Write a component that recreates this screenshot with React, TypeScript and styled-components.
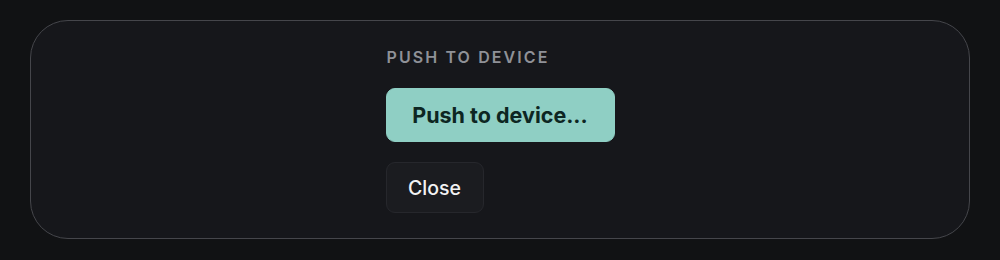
import React from "react";
import styled, { createGlobalStyle } from "styled-components";

const Global = createGlobalStyle`
  html, body { margin: 0; padding: 0; background: #111214; }
  body { font-family: Inter, "Noto Sans", sans-serif; -webkit-font-smoothing: antialiased; }
`;

const Page = styled.div`
  width: 1000px;
  height: 260px;
  box-sizing: border-box;
  padding: 20px 30px 21px;
  background: #111214;
`;

const Card = styled.section`
  box-sizing: border-box;
  height: 219px;
  border: 1px solid #45464b;
  border-radius: 38px;
  background: #16171b;
  display: flex;
  justify-content: center;
  padding-top: 26px;
`;

const Column = styled.div`
  width: 229px;
  display: flex;
  flex-direction: column;
  align-items: flex-start;
`;

const Label = styled.h2`
  margin: 0 0 0 1px;
  font-size: 16px;
  line-height: 20px;
  font-weight: 600;
  letter-spacing: 2.1px;
  color: #8f9197;
  text-transform: uppercase;
`;

const Button = styled.button<{ $primary?: boolean }>`
  box-sizing: border-box;
  font-family: Inter, "Noto Sans", sans-serif;
  border-radius: 9px;
  cursor: pointer;
  border: 1px solid ${(p) => (p.$primary ? "#8fcfc4" : "#26272c")};
  background: ${(p) => (p.$primary ? "#8fcfc4" : "#1b1c20")};
  color: ${(p) => (p.$primary ? "#0d2622" : "#f2f2f3")};
  font-weight: ${(p) => (p.$primary ? 700 : 500)};
  font-size: ${(p) => (p.$primary ? "21.5px" : "19.5px")};
  height: ${(p) => (p.$primary ? "54px" : "51px")};
  width: ${(p) => (p.$primary ? "229px" : "98px")};
  margin-top: ${(p) => (p.$primary ? "21px" : "20px")};
  padding: 0;
`;

export default function App() {
  return (
    <>
      <Global />
      <Page>
        <Card>
          <Column>
            <Label>Push to device</Label>
            <Button $primary>Push to device...</Button>
            <Button>Close</Button>
          </Column>
        </Card>
      </Page>
    </>
  );
}
